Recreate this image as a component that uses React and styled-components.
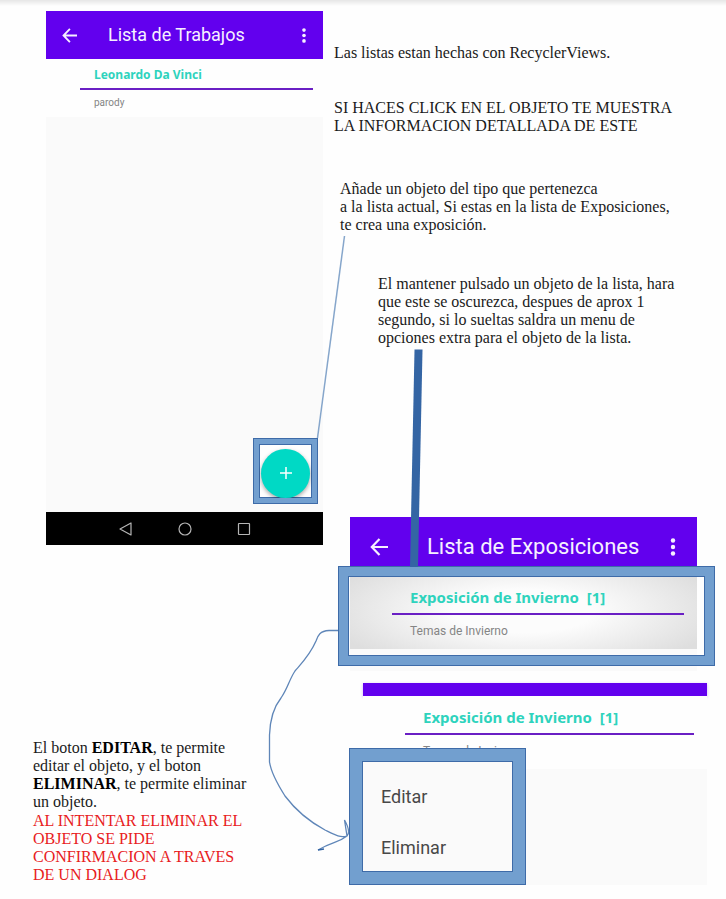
import React from "react";
import styled, { createGlobalStyle, css } from "styled-components";

const GlobalStyle = createGlobalStyle`
  *, *::before, *::after { box-sizing: border-box; }
  body { margin: 0; background: #fefefe; }
  button { font: inherit; color: inherit; background: none; border: 0; padding: 0; cursor: pointer; }
`;

const purple = "#6200ee";
const teal = "#2ed3bd";
const surface = "#fafafa";
const frameFill = "#729fcf";
const frameLine = "#3e6ba8";

const Page = styled.main`
  position: relative;
  display: grid;
  grid-template-columns: minmax(0, 323fr) minmax(0, 403fr);
  padding: 11px 0 14px;
  background: linear-gradient(#e6e6e6, #fefefe 6px);
`;

const Column = styled.div`
  display: flex;
  flex-direction: column;
`;

const Note = styled.p`
  margin: ${(p) => p.$margin};
  font: 16px/18px "Liberation Serif", serif;
  color: ${(p) => (p.$alert ? "#e8201c" : "#1a1a1a")};
  white-space: nowrap;

  strong { color: #000; }
`;

const Line = styled.span`
  display: block;
`;

const Screen = styled.section`
  position: relative;
  display: flex;
  flex-direction: column;
  margin: ${(p) => p.$margin};
  font-family: Roboto, sans-serif;
  background: ${surface};
`;

const AppBar = styled.header`
  display: flex;
  align-items: center;
  height: ${(p) => (p.$large ? 59 : 48)}px;
  padding: ${(p) => (p.$large ? "0 16px 0 20px" : "0 11px 0 16px")};
  color: #f6f0ff;
  background: ${purple};
`;

const BarTitle = styled.h2`
  flex: 1;
  margin: 0 0 0 ${(p) => (p.$large ? 39 : 31)}px;
  font-size: ${(p) => (p.$large ? 22 : 18)}px;
  line-height: 24px;
  font-weight: 400;
  white-space: nowrap;
`;

const IconButton = styled.button`
  display: grid;
  place-items: center;

  svg { display: block; }
`;

const BarStrip = styled.div`
  height: 13px;
  background: ${purple};
  box-shadow: 0 1px 3px rgba(98, 0, 238, 0.3);
`;

const rowSizes = {
  small: css`
    height: 58px;
    padding: 7px 10px 0 34px;
  `,
  pressed: css`
    height: 73px;
    padding: 10px 13px 0 42px;
    background: radial-gradient(ellipse 58% 85% at 50% 48%, #fcfcfc 35%, #dedede 100%);
  `,
  large: css`
    height: 73px;
    padding: 10px 13px 0 42px;
  `,
};

const Row = styled.article`
  background: #fefefe;
  ${(p) => rowSizes[p.$kind]}
`;

const RowTitle = styled.h3`
  margin: 0;
  padding: 0 0 ${(p) => (p.$small ? 4 : 5)}px ${(p) => (p.$small ? 14 : 18)}px;
  border-bottom: 2px solid #6a1fc4;
  font: bold ${(p) => (p.$small ? "12px/18px" : "15px/22px")} "Noto Sans", sans-serif;
  color: ${teal};
  white-space: pre;
`;

const RowText = styled.p`
  margin: ${(p) => (p.$small ? "5px 0 0 14px" : "8px 0 0 18px")};
  font-size: ${(p) => (p.$small ? 10 : 12)}px;
  line-height: 16px;
  color: #858585;
`;

const Body = styled.div`
  position: relative;
  height: ${(p) => p.$height}px;
`;

const frame = css`
  position: absolute;
  background: transparent;
  border: ${(p) => p.$thick}px solid ${frameFill};
  outline: 1px solid ${frameLine};
  outline-offset: -1px;
  box-shadow: inset 0 0 0 1px ${frameLine};
`;

const FabFrame = styled.div`
  ${frame}
  right: 5px;
  bottom: 8px;
  width: 65px;
  height: 66px;
  display: grid;
  place-items: center;
  padding-top: 4px;
  background: #fefefe;
  overflow: hidden;
`;

const Fab = styled.button`
  display: grid;
  place-items: center;
  width: 49px;
  height: 49px;
  border-radius: 50%;
  color: #fff;
  background: #00d9c5;
  box-shadow: 0 2px 4px rgba(0, 0, 0, 0.35);
`;

const RowFrame = styled.div`
  ${frame}
  top: 49px;
  left: -12px;
  right: -18px;
  height: 100px;
  pointer-events: none;
`;

const MenuFrame = styled.div`
  ${frame}
  left: -14px;
  bottom: 0;
  width: 177px;
  height: 137px;
  background: ${surface};
`;

const Menu = styled.ul`
  display: flex;
  flex-direction: column;
  gap: 27px;
  margin: 0;
  padding: 24px 0 0 19px;
  list-style: none;
  font-size: 18px;
  line-height: 24px;
  color: #484848;
`;

const NavBar = styled.nav`
  display: flex;
  align-items: center;
  justify-content: center;
  gap: 43px;
  height: 33px;
  color: #b5b5b5;
  background: #000;
`;

const Connectors = styled.svg`
  position: absolute;
  inset: 0;
  width: 100%;
  height: 100%;
  pointer-events: none;
`;

function BackIcon({ size }) {
  return (
    <svg width={size} height={size} viewBox="0 0 18 18" fill="none" stroke="currentColor" strokeWidth="2.2">
      <path d="M9.500 1 1.800 9l7.700 8M2 9h16" />
    </svg>
  );
}

function MoreIcon({ height }) {
  return (
    <svg width="16" height={height} viewBox="0 0 16 18" fill="currentColor">
      <circle cx="8" cy="2.500" r="2.200" />
      <circle cx="8" cy="9" r="2.200" />
      <circle cx="8" cy="15.500" r="2.200" />
    </svg>
  );
}

function Toolbar({ title, large }) {
  return (
    <AppBar $large={large}>
      <IconButton type="button" aria-label="Volver">
        <BackIcon size={large ? 18 : 15} />
      </IconButton>
      <BarTitle $large={large}>{title}</BarTitle>
      <IconButton type="button" aria-label="Más opciones">
        <MoreIcon height={large ? 18 : 15} />
      </IconButton>
    </AppBar>
  );
}

function ListRow({ kind, title, text }) {
  const small = kind === "small";
  return (
    <Row $kind={kind}>
      <RowTitle $small={small}>{title}</RowTitle>
      <RowText $small={small}>{text}</RowText>
    </Row>
  );
}

function Lines({ items }) {
  return items.map((text) => <Line key={text}>{text}</Line>);
}

export default function App() {
  return (
    <>
      <GlobalStyle />
      <Page>
        <Column>
          <Screen $margin="0 0 0 46px">
            <Toolbar title="Lista de Trabajos" />
            <ListRow kind="small" title="Leonardo Da Vinci" text="parody" />
            <Body $height={395}>
              <FabFrame $thick={6}>
                <Fab type="button" aria-label="Añadir">
                  <svg width="14" height="14" viewBox="0 0 14 14" stroke="currentColor" strokeWidth="1.500">
                    <path d="M7 1v12M1 7h12" />
                  </svg>
                </Fab>
              </FabFrame>
            </Body>
            <NavBar aria-label="Sistema">
              <IconButton type="button" aria-label="Atrás">
                <svg width="16" height="16" viewBox="0 0 16 16" fill="none" stroke="currentColor" strokeWidth="1.200">
                  <path d="M13 2v12L2 8Z" strokeLinejoin="round" />
                </svg>
              </IconButton>
              <IconButton type="button" aria-label="Inicio">
                <svg width="16" height="16" viewBox="0 0 16 16" fill="none" stroke="currentColor" strokeWidth="1.200">
                  <circle cx="8" cy="8" r="6" />
                </svg>
              </IconButton>
              <IconButton type="button" aria-label="Recientes">
                <svg width="16" height="16" viewBox="0 0 16 16" fill="none" stroke="currentColor" strokeWidth="1.200">
                  <rect x="2.500" y="2.500" width="11" height="11" rx="0.500" />
                </svg>
              </IconButton>
            </NavBar>
          </Screen>
          <Note $margin="194px 0 0 33px">
            <Line>El boton <strong>EDITAR</strong>, te permite</Line>
            <Line>editar el objeto, y el boton</Line>
            <Line><strong>ELIMINAR</strong>, te permite eliminar</Line>
            <Line>un objeto.</Line>
          </Note>
          <Note $alert $margin="1px 0 0 33px">
            <Lines items={["AL INTENTAR ELIMINAR EL", "OBJETO SE PIDE", "CONFIRMACION A TRAVES", "DE UN DIALOG"]} />
          </Note>
        </Column>

        <Column>
          <Note $margin="33px 0 0 11px">Las listas estan hechas con RecyclerViews.</Note>
          <Note $margin="37px 0 0 11px">
            <Lines items={["SI HACES CLICK EN EL OBJETO TE MUESTRA", "LA INFORMACION DETALLADA DE ESTE"]} />
          </Note>
          <Note $margin="45px 0 0 17px">
            <Lines
              items={[
                "Añade un objeto del tipo que pertenezca",
                "a la lista actual, Si estas en la lista de Exposiciones,",
                "te crea una exposición.",
              ]}
            />
          </Note>
          <Note $margin="41px 0 0 55px">
            <Lines
              items={[
                "El mantener pulsado un objeto de la lista, hara",
                "que este se oscurezca, despues de aprox 1",
                "segundo, si lo sueltas saldra un menu de",
                "opciones extra para el objeto de la lista.",
              ]}
            />
          </Note>

          <Screen $margin="170px 29px 0 27px">
            <Toolbar large title="Lista de Exposiciones" />
            <ListRow kind="pressed" title="Exposición de Invierno  [1]" text="Temas de Invierno" />
            <Body $height={22} />
            <RowFrame $thick={10} />
          </Screen>

          <Screen $margin="12px 19px 0 40px">
            <BarStrip />
            <ListRow kind="large" title="Exposición de Invierno  [1]" text="Temas de Invierno" />
            <Body $height={116}>
              <MenuFrame $thick={13}>
                <Menu>
                  <li><button type="button">Editar</button></li>
                  <li><button type="button">Eliminar</button></li>
                </Menu>
              </MenuFrame>
            </Body>
          </Screen>
        </Column>

        <Connectors viewBox="0 0 726 899" preserveAspectRatio="none" fill="none" stroke="#5f86b8" aria-hidden="true">
          <path d="M344.500 236 317.500 438" strokeWidth="1.500" stroke="#86a6cb" />
          <path d="M414.500 349.500h8L418 567h-8Z" fill="#3465a4" stroke="none" />
          <path
            d="M338 630.500H329C320 631 318 635 316 641C310 655 301 664 295 671C289 680 288 688 281 698C273 708 270 720 269.500 735V762C271 772 278 785 285 796C297 812 312 823 325 830C335 835 340 838 347 836C350 833 349 828 344.500 820L347 836C338 843 333 841 318 850"
            strokeWidth="1.300"
          />
          <path d="M318 850 324 849" strokeWidth="1.500" stroke="#3465a4" />
        </Connectors>
      </Page>
    </>
  );
}
